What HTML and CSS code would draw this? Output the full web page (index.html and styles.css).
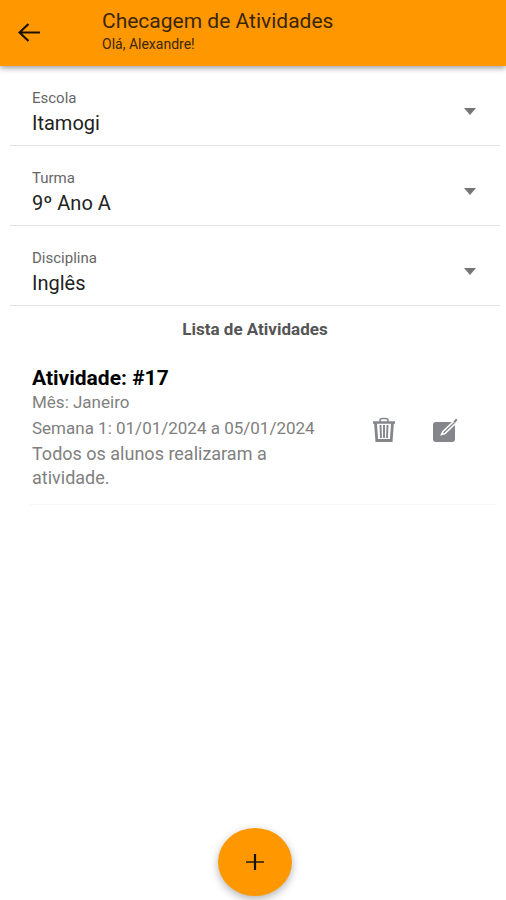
FILE: index.html
```html
<!DOCTYPE html>
<html lang="pt-BR">
<head>
<meta charset="utf-8">
<meta name="viewport" content="width=device-width, initial-scale=1">
<title>Checagem de Atividades</title>
<link rel="stylesheet" href="styles.css">
</head>
<body>
<header class="toolbar">
  <button class="icon-button" type="button" aria-label="Voltar">
    <svg width="24" height="22" viewBox="0 0 24 22" fill="none" stroke="currentColor" stroke-width="2.2"><path d="M10.500 2 1.500 10.500l9 8.500M1.500 10.500H22"/></svg>
  </button>
  <div class="heading">
    <h1 class="title">Checagem de Atividades</h1>
    <p class="greeting">Olá, Alexandre!</p>
  </div>
</header>
<main class="content">
  <form class="filters">
    <div class="field">
      <label class="field-label" for="escola">Escola</label>
      <select class="field-select" id="escola"><option>Itamogi</option></select>
      <svg class="caret" width="12" height="7" viewBox="0 0 12 7" fill="currentColor"><path d="M0 0h12L6 7z"/></svg>
    </div>
    <div class="field">
      <label class="field-label" for="turma">Turma</label>
      <select class="field-select" id="turma"><option>9º Ano A</option></select>
      <svg class="caret" width="12" height="7" viewBox="0 0 12 7" fill="currentColor"><path d="M0 0h12L6 7z"/></svg>
    </div>
    <div class="field">
      <label class="field-label" for="disciplina">Disciplina</label>
      <select class="field-select" id="disciplina"><option>Inglês</option></select>
      <svg class="caret" width="12" height="7" viewBox="0 0 12 7" fill="currentColor"><path d="M0 0h12L6 7z"/></svg>
    </div>
  </form>
  <h2 class="list-title">Lista de Atividades</h2>
  <article class="activity">
    <div class="activity-text">
      <h3 class="activity-title">Atividade: #17</h3>
      <p class="activity-meta">Mês: Janeiro</p>
      <p class="activity-meta activity-week">Semana 1: 01/01/2024 a 05/01/2024</p>
      <p class="activity-note">Todos os alunos realizaram a atividade.</p>
    </div>
    <div class="actions">
      <button class="icon-button" type="button" aria-label="Excluir">
        <svg width="24" height="26" viewBox="0 0 24 26" fill="none" stroke="currentColor"><path d="M8 5V3.500q0-2 2-2h4q2 0 2 2V5" stroke-width="1.500"/><path d="M1 5.500h22" stroke-width="2.500"/><path d="M3.500 6 4.800 23.500h14.400L20.500 6" stroke-width="2.800"/><path d="M8.500 8l.5 13M12 8v13M15.500 8l-.5 13" stroke-width="1.900"/></svg>
      </button>
      <button class="icon-button" type="button" aria-label="Editar">
        <svg width="26" height="26" viewBox="0 0 26 26"><rect x="1" y="5" width="22" height="20" rx="3" fill="currentColor"/><path d="M21.500 4.500 11 14.500l-1.500 3 3.500-1L23.500 6.500" fill="#85868c" stroke="#fff" stroke-width="1.600"/><path d="M21.500 4.500 24 1.500l1.500 1.500-2.500 3z" fill="currentColor"/></svg>
      </button>
    </div>
  </article>
</main>
<footer class="footer">
  <button class="fab" type="button" aria-label="Adicionar">
    <svg width="20" height="20" viewBox="0 0 20 20" fill="none" stroke="currentColor"><path d="M10 2v16" stroke-width="2.200"/><path d="M1 10h18" stroke-width="1.400"/></svg>
  </button>
</footer>
</body>
</html>
```
FILE: styles.css
```css
* {
  box-sizing: border-box;
}

body {
  display: flex;
  flex-direction: column;
  min-height: 100vh;
  margin: 0;
  background: #fff;
  color: #222;
  font-family: Roboto, "Liberation Sans", sans-serif;
}

h1,
h2,
h3,
p {
  margin: 0;
}

button {
  padding: 0;
  border: 0;
  background: none;
  color: inherit;
}

svg {
  display: block;
}

.toolbar {
  display: flex;
  align-items: center;
  gap: 60px;
  padding: 8px 18px;
  background: #ff9800;
  color: #1a1200;
  box-shadow: 0 2px 6px rgba(0, 0, 0, 0.4);
}

.heading {
  min-height: 50px;
}

.title {
  color: #3a2608;
  font-size: 21px;
  font-weight: 400;
  line-height: 26px;
}

.greeting {
  color: #3a2608;
  font-size: 14px;
  line-height: 20px;
}

.content {
  flex: 1;
}

.filters {
  padding: 0 6px 0 10px;
}

.field {
  display: grid;
  grid-template-columns: 1fr auto;
  align-items: center;
  padding: 24px 24px 8px 22px;
  border-bottom: 1px solid #e2e2e2;
}

.field-label {
  grid-area: 1 / 1;
  color: #666;
  font-size: 15px;
  line-height: 16px;
}

.field-select {
  grid-area: 2 / 1 / 3 / 3;
  height: 31px;
  padding: 2px 24px 0 0;
  border: 0;
  background: none;
  color: #222;
  font: inherit;
  font-size: 20px;
  appearance: none;
}

.caret {
  grid-area: 1 / 2 / 3 / 3;
  margin-bottom: 4px;
  color: #757575;
  pointer-events: none;
}

.list-title {
  padding: 12px 0 12px 4px;
  color: #555;
  font-size: 17px;
  font-weight: 700;
  line-height: 22px;
  text-align: center;
}

.activity {
  display: flex;
  align-items: center;
  justify-content: space-between;
  margin: 0 10px 0 30px;
  padding: 14px 36px 14px 2px;
  border-bottom: 1px solid #f7f7f7;
}

.activity-text {
  flex: 0 1 300px;
}

.activity-title {
  color: #000;
  font-size: 21px;
  font-weight: 700;
  line-height: 24px;
}

.activity-meta {
  color: #808080;
  font-size: 17px;
  line-height: 24px;
}

.activity-week {
  padding: 2px 0;
}

.activity-note {
  max-width: 270px;
  color: #808080;
  font-size: 18px;
  line-height: 24px;
}

.actions {
  display: flex;
  gap: 36px;
  padding: 4px 2px 0 0;
  color: #85868c;
}

.footer {
  position: sticky;
  bottom: 0;
  display: flex;
  justify-content: center;
  padding: 0 0 4px 4px;
}

.fab {
  display: grid;
  place-items: center;
  width: 74px;
  height: 68px;
  border-radius: 50%;
  background: #ff9800;
  color: #111;
  box-shadow: 0 3px 8px rgba(0, 0, 0, 0.3);
}
```
